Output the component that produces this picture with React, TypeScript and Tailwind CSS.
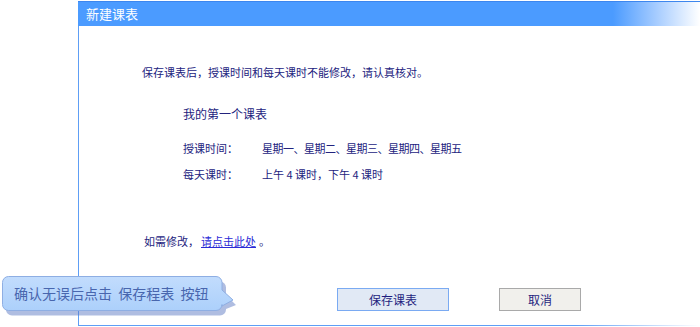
import React from "react";

export default function App() {
  const font = { fontFamily: '"Noto Sans CJK SC", "Noto Sans", sans-serif' };
  return (
    <div className="relative w-[700px] h-[327px] bg-white overflow-hidden" style={font}>
      <div className="ml-[78px] pt-[1px] w-[622px] flex flex-col">
        {/* title bar */}
        <div className="h-[25px] flex items-center pl-[8px] text-[13px] text-white border-t border-[#3d86ee] bg-[linear-gradient(to_right,#4b9bff_0%,#4b9bff_86%,#a6ccff_93%,#ffffff_100%)]">
          新建课表
        </div>
        {/* body */}
        <div className="h-[299px] border-l border-[#5e9ef5] flex flex-col text-[#23237e] text-[11px]">
          <div className="mt-[38px] pl-[63px] leading-[16px]">
            保存课表后，授课时间和每天课时不能修改，请认真核对。
          </div>
          <div className="mt-[25px] pl-[104px] text-[12px] leading-[18px]">我的第一个课表</div>
          <div className="mt-[17px] pl-[104px] leading-[16px] flex">
            <span className="w-[79px]">授课时间：</span>
            <span className="tracking-[-0.5px]">星期一、星期二、星期三、星期四、星期五</span>
          </div>
          <div className="mt-[10px] pl-[104px] leading-[16px] flex">
            <span className="w-[79px]">每天课时：</span>
            <span>上午 4 课时，下午 4 课时</span>
          </div>
          <div className="mt-[51px] pl-[65px] leading-[16px] flex">
            <span className="w-[57px]">如需修改，</span>
            <span className="text-[#2b2bd6] underline">请点击此处</span>
            <span className="ml-[3px]">。</span>
          </div>
          <div className="mt-[39px] flex">
            <div className="ml-[258px] w-[112px] h-[23px] flex items-center justify-center border border-[#7aaaf2] bg-[#e1e9f5] text-[12px] text-[#1f1f80]">
              保存课表
            </div>
            <div className="ml-[50px] w-[82px] h-[23px] flex items-center justify-center border border-[#a9a9a9] bg-[#f1f0ec] text-[12px] text-[#1f1f80]">
              取消
            </div>
          </div>
        </div>
        <div className="h-[1px] bg-[linear-gradient(to_right,#5e9ef5_0%,#5e9ef5_80%,#ffffff_100%)]" />
      </div>

      {/* tooltip */}
      <div className="absolute left-[2px] top-[276px]">
        <svg width="240" height="42" className="absolute left-0 top-0">
          <defs>
            <linearGradient id="bg" x1="0" y1="0" x2="0" y2="1">
              <stop offset="0" stopColor="#c2dcfd" />
              <stop offset="1" stopColor="#acd0fb" />
            </linearGradient>
          </defs>
          <path
            d="M8 3.5 H216 a6 6 0 0 1 6 6 V17 L232 27 L222 31 V31.5 a6 6 0 0 1 -6 6 H8 a6 6 0 0 1 -6 -6 V9.5 a6 6 0 0 1 6 -6 Z"
            fill="#5f7cc4"
            opacity="0.5"
            transform="translate(2,2)"
          />
          <path
            d="M6.5 0.5 H214 a6 6 0 0 1 6 6 V14 L231 24 L220 30 V28.5 a6 6 0 0 1 -6 6 H6.5 a6 6 0 0 1 -6 -6 V6.5 a6 6 0 0 1 6 -6 Z"
            fill="url(#bg)"
            stroke="#8eaee3"
            strokeWidth="1"
          />
        </svg>
        <div className="relative h-[35px] pl-[12px] flex items-center text-[14px] text-[#4866ae] whitespace-pre">
          确认无误后点击  保存程表  按钮
        </div>
      </div>
    </div>
  );
}
